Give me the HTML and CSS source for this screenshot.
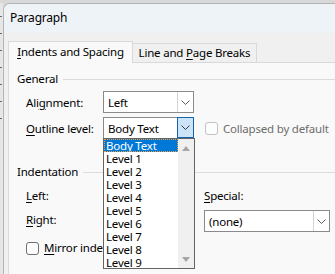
FILE: index.html
```html
<!DOCTYPE html>
<html>
<head>
<meta charset="utf-8">
<link rel="stylesheet" href="styles.css">
</head>
<body>
<div class="desk">
  <div class="strip"><i></i><i></i><i></i><i></i><i></i><i></i><i></i></div>
  <div class="dialog">
    <div class="titlebar">Paragraph</div>
    <div class="client">
      <div class="tabs">
        <div class="tab active"><u>I</u>ndents and Spacing</div>
        <div class="tab">Line and <u>P</u>age Breaks</div>
      </div>
      <div class="panel">
        <div class="group-title"><span>General</span><i class="rule"></i></div>
        <div class="row first">
          <span class="lbl">Ali<u>g</u>nment:</span>
          <div class="select w91">
            <span class="val">Left</span>
            <span class="btn"><svg width="9" height="5" viewBox="0 0 9 5"><polyline points="0.5,0.5 4.5,4.5 8.5,0.5" fill="none" stroke="#5a5a5a" stroke-width="1"/></svg></span>
          </div>
        </div>
        <div class="row">
          <span class="lbl"><u>O</u>utline level:</span>
          <div class="select w91 open">
            <span class="val">Body Text</span>
            <span class="btn"><svg width="9" height="5" viewBox="0 0 9 5"><polyline points="0.5,0.5 4.5,4.5 8.5,0.5" fill="none" stroke="#3a3a3a" stroke-width="1"/></svg></span>
            <div class="list">
              <div class="items">
                <div class="item sel">Body Text</div>
                <div class="item">Level 1</div>
                <div class="item">Level 2</div>
                <div class="item">Level 3</div>
                <div class="item">Level 4</div>
                <div class="item">Level 5</div>
                <div class="item">Level 6</div>
                <div class="item">Level 7</div>
                <div class="item">Level 8</div>
                <div class="item">Level 9</div>
              </div>
              <div class="scroll">
                <i class="up"></i>
                <i class="down"></i>
              </div>
            </div>
          </div>
          <span class="check disabled"><i class="box"></i>Collapsed by default</span>
        </div>
        <div class="group-title second"><span>Indentation</span><i class="rule"></i></div>
        <div class="indent">
          <div class="col-left">
            <div class="irow"><span class="lbl"><u>L</u>eft:</span></div>
            <div class="irow gap"><span class="lbl"><u>R</u>ight:</span></div>
            <div class="irow mirror"><span class="check"><i class="box"></i><span><u>M</u>irror indents</span></span></div>
          </div>
          <div class="col-right">
            <div class="irow"><span><u>S</u>pecial:</span></div>
            <div class="select w126 special">
              <span class="val">(none)</span>
              <span class="btn"><svg width="9" height="5" viewBox="0 0 9 5"><polyline points="0.5,0.5 4.5,4.5 8.5,0.5" fill="none" stroke="#5a5a5a" stroke-width="1"/></svg></span>
            </div>
          </div>
        </div>
      </div>
    </div>
  </div>
</div>
</body>
</html>
```
FILE: styles.css
```css
html, body {
  margin: 0;
  padding: 0;
}
body {
  font-family: "Noto Sans", "Liberation Sans", sans-serif;
  font-size: 11.5px;
  letter-spacing: -0.2px;
  color: #000;
  background: #e4e4e4;
}
u {
  text-decoration: underline;
  text-underline-offset: 2px;
}
.desk {
  width: 335px;
  height: 274px;
  overflow: hidden;
  display: flex;
  padding-top: 3px;
  box-sizing: border-box;
  background: #d8d8d8;
  position: relative;
}
.strip {
  width: 3px;
  flex: none;
  display: flex;
  flex-direction: column;
  gap: 16px;
  padding-top: 13px;
  background: #e6e6e6;
}
.strip i {
  display: block;
  width: 2px;
  height: 1px;
  background: #6a6a6a;
}
.dialog {
  flex: none;
  width: 420px;
  border-top: 1px solid #b4b4b4;
  border-left: 1px solid #b4b4b4;
  border-top-left-radius: 7px;
  overflow: hidden;
  background: #f0f0f0;
}
.titlebar {
  height: 29px;
  line-height: 28px;
  padding-left: 6px;
  background: #eef3f8;
  font-size: 12px;
}
.client {
  padding: 8px 0 0 4px;
  background: #f0f0f0;
  height: 260px;
}
.tabs {
  display: flex;
  align-items: flex-end;
  height: 21px;
  position: relative;
  z-index: 1;
}
.tab {
  box-sizing: border-box;
  width: 124px;
  height: 19px;
  line-height: 17px;
  text-align: center;
  border: 1px solid #d9d9d9;
  border-left: none;
  border-bottom: none;
  background: #f0f0f0;
  white-space: nowrap;
}
.tab.active {
  width: 125px;
  height: 22px;
  line-height: 20px;
  border-left: 1px solid #d9d9d9;
  background: #f9f9f9;
  margin-bottom: -1px;
}
.panel {
  background: #f9f9f9;
  border-top: 1px solid #d9d9d9;
  border-left: 1px solid #d9d9d9;
  padding: 8px 0 0 8px;
  height: 240px;
}
.group-title {
  display: flex;
  align-items: center;
  height: 16px;
  line-height: 16px;
}
.group-title.second {
  margin-top: 25px;
}
.group-title .rule {
  flex: 1;
  height: 1px;
  background: #dcdcdc;
  margin-left: 5px;
}
.row {
  display: flex;
  align-items: center;
  padding-left: 9px;
  margin-top: 4px;
  height: 22px;
}
.lbl {
  width: 77px;
  flex: none;
}
.select {
  position: relative;
  box-sizing: border-box;
  height: 22px;
  border: 1px solid #8a8a8a;
  background: #fff;
  display: flex;
  align-items: center;
  flex: none;
}
.w91 { width: 91px; }
.w126 { width: 126px; }
.select .val {
  flex: 1;
  padding-left: 4px;
  white-space: nowrap;
}
.select .btn {
  box-sizing: border-box;
  width: 16px;
  height: 20px;
  border-left: 1px solid #d4d4d4;
  display: flex;
  align-items: center;
  justify-content: center;
  background: #fff;
}
.select.open .btn {
  width: 17px;
  height: 21px;
  margin: -1px -1px 0 0;
  align-self: flex-start;
  border: 1px solid #1763aa;
  background: #cce4f7;
}
.list {
  position: absolute;
  left: -1px;
  top: 20px;
  width: 92px;
  height: 131px;
  box-sizing: border-box;
  border: 1px solid #646464;
  background: #fff;
  display: flex;
  z-index: 5;
}
.items {
  flex: 1;
}
.item {
  height: 13px;
  line-height: 13px;
  padding-left: 2px;
  white-space: nowrap;
  overflow: hidden;
}
.item.sel {
  background: #0078d7;
  color: #fff;
  outline: 1px dotted #f0a040;
  outline-offset: -1px;
}
.scroll {
  width: 16px;
  background: #f0f0f0;
  display: flex;
  flex-direction: column;
  justify-content: space-between;
  align-items: center;
  padding: 7px 0 6px;
  box-sizing: border-box;
}
.scroll i {
  display: block;
  width: 0;
  height: 0;
  border-left: 4px solid transparent;
  border-right: 4px solid transparent;
}
.scroll .up {
  border-bottom: 5px solid #a6a6a6;
}
.scroll .down {
  border-top: 5px solid #a6a6a6;
}
.check {
  display: flex;
  align-items: center;
  white-space: nowrap;
}
.row .check {
  margin-left: 11px;
}
.check .box {
  display: block;
  box-sizing: border-box;
  width: 13px;
  height: 13px;
  border: 1px solid #6f6f6f;
  border-radius: 3px;
  background: #fdfdfd;
  margin-right: 5px;
}
.check.disabled {
  color: #6d6d6d;
}
.check.disabled .box {
  border-color: #c2c2c2;
}
.indent {
  display: flex;
  margin-top: 8px;
}
.col-left {
  width: 187px;
  padding-left: 9px;
  box-sizing: border-box;
  flex: none;
}
.irow {
  display: flex;
  align-items: center;
  height: 16px;
  line-height: 16px;
}
.irow.gap {
  margin-top: 8px;
}
.irow.mirror {
  margin-top: 12px;
}
.special {
  margin-top: 6px;
}
```
